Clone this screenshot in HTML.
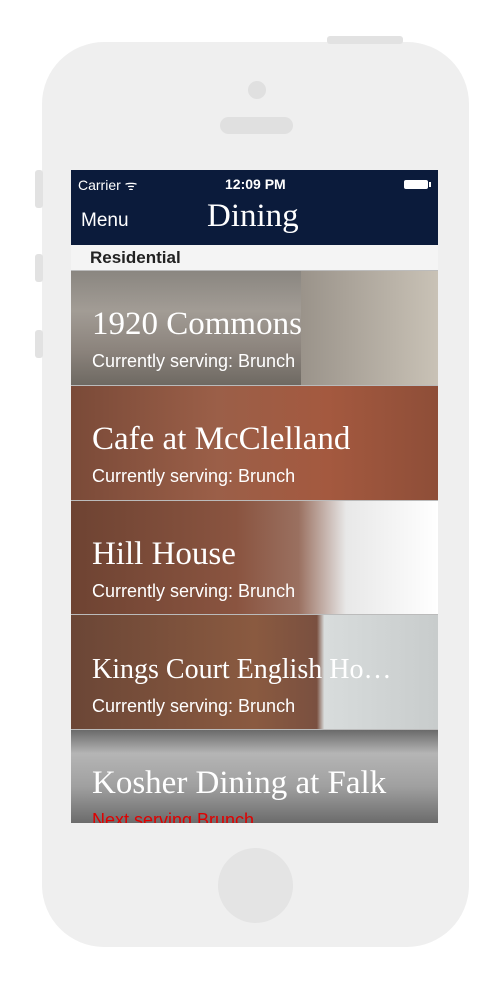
<!DOCTYPE html>
<html><head><style>
body{margin:0;width:502px;height:987px;background:#fff;position:relative;overflow:hidden;font-family:"Liberation Sans",sans-serif}
.a{position:absolute}
.phone{left:42px;top:42px;width:427px;height:905px;background:#efefef;border-radius:62px}
.btn{background:#e2e2e2;border-radius:3px}
.screen{left:71px;top:170px;width:367px;height:653px;background:#f4f4f4;overflow:hidden}
.nav{left:0;top:0;width:367px;height:75px;background:#0b1b3b;color:#fff}
.row{left:0;width:367px;height:114px;overflow:hidden;border-top:1px solid #bbb}
.t{left:21px;font-family:"Liberation Serif",serif;color:#fff;font-size:33px;white-space:nowrap}
.s{left:21px;color:#fff;font-size:18px;white-space:nowrap}
</style></head><body>
<div class="a phone"></div>
<div class="a btn" style="left:327px;top:36px;width:76px;height:8px"></div>
<div class="a btn" style="left:35px;top:170px;width:8px;height:38px"></div>
<div class="a btn" style="left:35px;top:254px;width:8px;height:28px"></div>
<div class="a btn" style="left:35px;top:330px;width:8px;height:28px"></div>
<div class="a" style="left:248px;top:81px;width:18px;height:18px;border-radius:50%;background:#e0e0e0"></div>
<div class="a" style="left:220px;top:117px;width:73px;height:17px;border-radius:9px;background:#e0e0e0"></div>
<div class="a" style="left:218px;top:848px;width:75px;height:75px;border-radius:50%;background:#e4e4e4"></div>
<div class="a screen">
 <div class="a nav">
  <div class="a" style="left:7px;top:6px;font-size:14px">Carrier ᯤ</div>
  <div class="a" style="left:154px;top:6px;font-size:14px;font-weight:bold">12:09 PM</div>
  <div class="a" style="left:333px;top:10px;width:24px;height:9px;background:#fff;border-radius:2px"></div>
  <div class="a" style="left:358px;top:12px;width:2px;height:5px;background:#fff"></div>
  <div class="a" style="left:10px;top:40px;font-size:19px">Menu</div>
  <div class="a" style="left:136px;top:28px;font-family:'Liberation Serif',serif;font-size:33px">Dining</div>
 </div>
 <div class="a" style="left:19px;top:78px;font-size:17px;font-weight:bold;color:#222">Residential</div>
 <div class="a row" style="top:100px;background:linear-gradient(180deg,#8a8680 0%,#a29c95 35%,#8b837c 70%,#6e6962 100%)">
  <div class="a" style="left:230px;top:0;width:137px;height:114px;background:linear-gradient(90deg,#9a938a,#c9c2b6)"></div>
  <div class="a t" style="top:35px">1920 Commons</div><div class="a s" style="top:80px">Currently serving: Brunch</div></div>
 <div class="a row" style="top:215px;background:linear-gradient(90deg,#7a4a38,#9b5f48 40%,#a4593f 70%,#8e4e38)">
  <div class="a t" style="top:35px">Cafe at McClelland</div><div class="a s" style="top:80px">Currently serving: Brunch</div></div>
 <div class="a row" style="top:330px;background:linear-gradient(90deg,#6e4332,#8a5440 45%,#9a7060 62%,#e8e8e8 75%,#ffffff)">
  <div class="a t" style="top:35px">Hill House</div><div class="a s" style="top:80px">Currently serving: Brunch</div></div>
 <div class="a row" style="top:444px;background:linear-gradient(90deg,#6b4636,#8a5a40 50%,#7a5040 67%,#d8dcdc 69%,#c8cccc)">
  <div class="a t" style="top:39px;font-size:28px">Kings Court English Ho…</div><div class="a s" style="top:81px">Currently serving: Brunch</div></div>
 <div class="a row" style="top:559px;height:94px;background:linear-gradient(180deg,#6a6a6a,#b5b5b5 25%,#a0a0a0 60%,#6a6a6a)">
  <div class="a t" style="top:35px">Kosher Dining at Falk</div><div class="a s" style="top:80px;color:#e00000">Next serving Brunch</div></div>
</div>
</body></html>
